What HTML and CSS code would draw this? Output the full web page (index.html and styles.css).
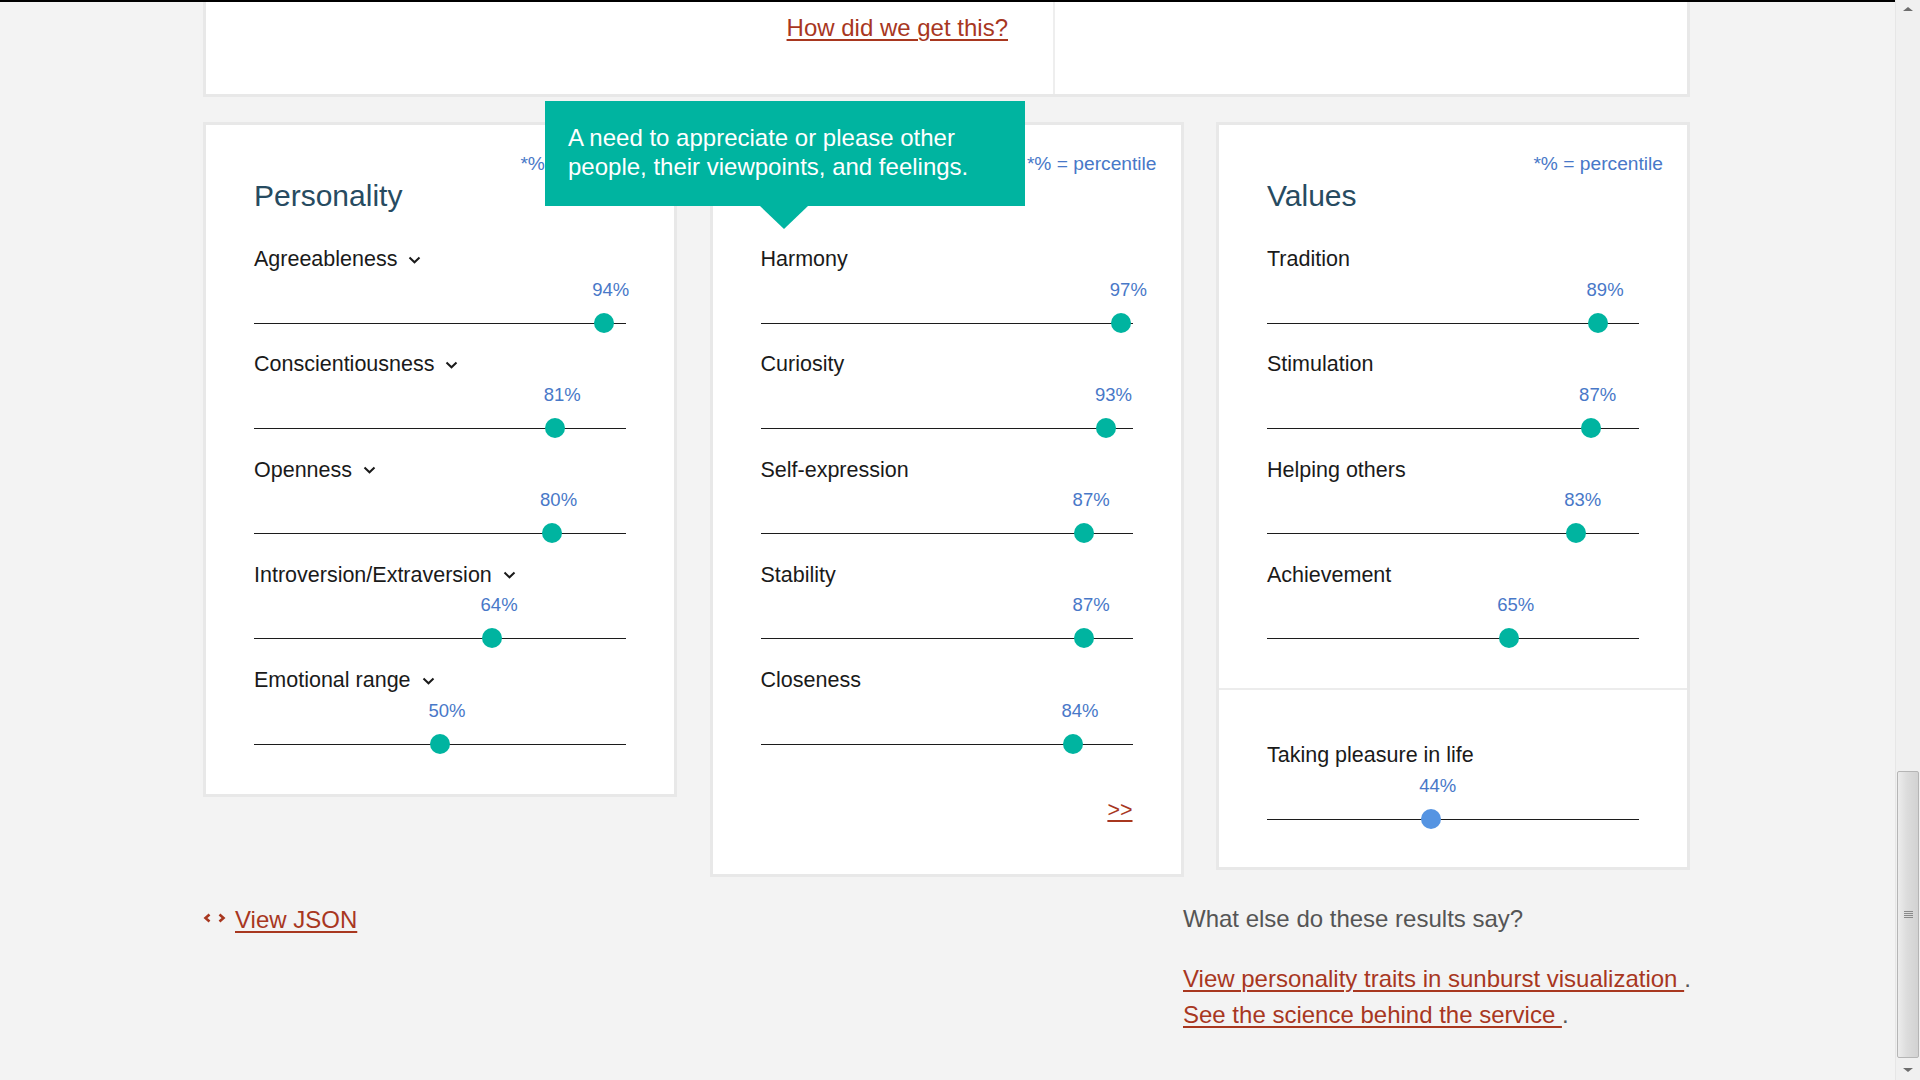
FILE: index.html
```html
<!DOCTYPE html>
<html lang="en">
<head>
<meta charset="utf-8">
<title>Personality Insights</title>
<link rel="stylesheet" href="styles.css">
</head>
<body>
<div class="topbar"></div>
<div class="page">
  <section class="summary">
    <div class="summary-main"><a href="#" class="link">How did we get this?</a></div>
    <div class="summary-side"></div>
  </section>

  <section class="results">
    <div class="tooltip">A need to appreciate or please other people, their viewpoints, and feelings.</div>

    <article class="card">
      <div class="card-section">
        <p class="note">*% = percentile</p>
        <h2 class="card-title">Personality</h2>
        <ul class="traits">
          <li class="trait" style="--p:94%">
            <div class="trait-name">Agreeableness <svg class="chev" viewBox="0 0 13 8"><polyline points="1.5,1.5 6.5,6.3 11.5,1.5"/></svg></div>
            <div class="trait-pct"><span>94%</span></div>
            <div class="trait-bar"><span class="knob"></span></div>
          </li>
          <li class="trait" style="--p:81%">
            <div class="trait-name">Conscientiousness <svg class="chev" viewBox="0 0 13 8"><polyline points="1.5,1.5 6.5,6.3 11.5,1.5"/></svg></div>
            <div class="trait-pct"><span>81%</span></div>
            <div class="trait-bar"><span class="knob"></span></div>
          </li>
          <li class="trait" style="--p:80%">
            <div class="trait-name">Openness <svg class="chev" viewBox="0 0 13 8"><polyline points="1.5,1.5 6.5,6.3 11.5,1.5"/></svg></div>
            <div class="trait-pct"><span>80%</span></div>
            <div class="trait-bar"><span class="knob"></span></div>
          </li>
          <li class="trait" style="--p:64%">
            <div class="trait-name">Introversion/Extraversion <svg class="chev" viewBox="0 0 13 8"><polyline points="1.5,1.5 6.5,6.3 11.5,1.5"/></svg></div>
            <div class="trait-pct"><span>64%</span></div>
            <div class="trait-bar"><span class="knob"></span></div>
          </li>
          <li class="trait" style="--p:50%">
            <div class="trait-name">Emotional range <svg class="chev" viewBox="0 0 13 8"><polyline points="1.5,1.5 6.5,6.3 11.5,1.5"/></svg></div>
            <div class="trait-pct"><span>50%</span></div>
            <div class="trait-bar"><span class="knob"></span></div>
          </li>
        </ul>
      </div>
    </article>

    <article class="card">
      <div class="card-section">
        <p class="note">*% = percentile</p>
        <h2 class="card-title card-title-hidden">Needs</h2>
        <ul class="traits">
          <li class="trait" style="--p:97%">
            <div class="trait-name">Harmony</div>
            <div class="trait-pct"><span>97%</span></div>
            <div class="trait-bar"><span class="knob"></span></div>
          </li>
          <li class="trait" style="--p:93%">
            <div class="trait-name">Curiosity</div>
            <div class="trait-pct"><span>93%</span></div>
            <div class="trait-bar"><span class="knob"></span></div>
          </li>
          <li class="trait" style="--p:87%">
            <div class="trait-name">Self-expression</div>
            <div class="trait-pct"><span>87%</span></div>
            <div class="trait-bar"><span class="knob"></span></div>
          </li>
          <li class="trait" style="--p:87%">
            <div class="trait-name">Stability</div>
            <div class="trait-pct"><span>87%</span></div>
            <div class="trait-bar"><span class="knob"></span></div>
          </li>
          <li class="trait" style="--p:84%">
            <div class="trait-name">Closeness</div>
            <div class="trait-pct"><span>84%</span></div>
            <div class="trait-bar"><span class="knob"></span></div>
          </li>
        </ul>
        <div class="more"><a href="#" class="link">&gt;&gt;</a></div>
      </div>
    </article>

    <article class="card">
      <div class="card-section">
        <p class="note">*% = percentile</p>
        <h2 class="card-title">Values</h2>
        <ul class="traits">
          <li class="trait" style="--p:89%">
            <div class="trait-name">Tradition</div>
            <div class="trait-pct"><span>89%</span></div>
            <div class="trait-bar"><span class="knob"></span></div>
          </li>
          <li class="trait" style="--p:87%">
            <div class="trait-name">Stimulation</div>
            <div class="trait-pct"><span>87%</span></div>
            <div class="trait-bar"><span class="knob"></span></div>
          </li>
          <li class="trait" style="--p:83%">
            <div class="trait-name">Helping others</div>
            <div class="trait-pct"><span>83%</span></div>
            <div class="trait-bar"><span class="knob"></span></div>
          </li>
          <li class="trait" style="--p:65%">
            <div class="trait-name">Achievement</div>
            <div class="trait-pct"><span>65%</span></div>
            <div class="trait-bar"><span class="knob"></span></div>
          </li>
        </ul>
      </div>
      <div class="card-section card-section-extra">
        <ul class="traits">
          <li class="trait" style="--p:44%">
            <div class="trait-name">Taking pleasure in life</div>
            <div class="trait-pct"><span>44%</span></div>
            <div class="trait-bar"><span class="knob knob-blue"></span></div>
          </li>
        </ul>
      </div>
    </article>
  </section>

  <section class="footer">
    <div class="footer-left">
      <a href="#" class="json-link"><svg class="code-icon" viewBox="0 0 24 10"><polyline points="6.5,1.5 2.5,5 6.5,8.5"/><polyline points="16.5,1.5 20.5,5 16.5,8.5"/></svg><span class="link">View JSON</span></a>
    </div>
    <div class="footer-right">
      <p class="footer-q">What else do these results say?</p>
      <ul class="footer-links">
        <li><a href="#" class="link">View personality traits in sunburst visualization </a><span class="dot">.</span></li>
        <li><a href="#" class="link">See the science behind the service </a><span class="dot">.</span></li>
      </ul>
    </div>
  </section>
</div>

<div class="scrollbar">
  <div class="sb-btn sb-up"><span class="sb-arrow-up"></span></div>
  <div class="sb-track">
    <div class="sb-thumb"><span class="sb-grip"></span></div>
  </div>
  <div class="sb-btn sb-down"><span class="sb-arrow-down"></span></div>
</div>
</body>
</html>
```
FILE: styles.css
```css
* { box-sizing: border-box; }

html, body {
  margin: 0;
  padding: 0;
  height: 100%;
  overflow: hidden;
}

body {
  background: #f3f3f3;
  font-family: "Liberation Sans", Arial, sans-serif;
  color: #1e1e1e;
  padding-right: 27px;
}

.topbar {
  position: fixed;
  top: 0;
  left: 0;
  right: 25px;
  height: 2px;
  background: #000;
  z-index: 10;
}

.page {
  width: 1487px;
  margin: 0 auto;
}

.link {
  color: #a8371f;
  text-decoration: underline;
  text-decoration-thickness: 2px;
  text-underline-offset: 3px;
}

/* top summary card */
.summary {
  display: grid;
  grid-template-columns: 849px 1fr;
  background: #fff;
  border: 3px solid #e8e8e8;
  border-top: none;
  height: 97px;
}
.summary-main {
  border-right: 2px solid #eeeeee;
  text-align: right;
  padding: 14px 45px 0 0;
  font-size: 24px;
  line-height: 28px;
}

/* result cards */
.results {
  position: relative;
  display: grid;
  grid-template-columns: repeat(3, 474px);
  column-gap: 32.5px;
  align-items: start;
  margin-top: 25px;
}

.card {
  background: #fff;
  border: 3px solid #e8e8e8;
}

.card-section {
  padding: 28px 48px 40px;
}
.card-section-extra {
  border-top: 2px solid #ececec;
  padding: 52px 48px 38px;
}

.note {
  margin: 0 -24px 0 0;
  text-align: right;
  color: #4878c8;
  font-size: 19.2px;
  line-height: 22px;
}

.card-title {
  margin: 3px 0 0;
  font-weight: normal;
  font-size: 30px;
  line-height: 36px;
  color: #274b61;
}
.card-title-hidden { visibility: hidden; }

.traits {
  list-style: none;
  margin: 32px 0 0;
  padding: 0;
  display: flex;
  flex-direction: column;
  gap: 18.8px;
}
.card-section-extra .traits { margin-top: 0; }

.trait-name {
  display: flex;
  align-items: center;
  gap: 11px;
  font-size: 21.5px;
  line-height: 26px;
  color: #1a1a1a;
}
.chev {
  width: 13px;
  height: 8px;
  fill: none;
  stroke: #1a1a1a;
  stroke-width: 2;
  margin-top: 1px;
}

.trait-pct {
  margin-top: 6.5px;
  font-size: 18.5px;
  line-height: 22px;
  color: #4878c8;
  white-space: nowrap;
}
.trait-pct span {
  display: inline-block;
  margin-left: calc(var(--p) + 7px);
  transform: translateX(-50%);
}

.trait-bar {
  margin-top: 12px;
  height: 20px;
  background: linear-gradient(#1c1c1c, #1c1c1c) 0 10px / 100% 1px no-repeat;
}
.knob {
  display: block;
  width: 20px;
  height: 20px;
  border-radius: 50%;
  background: #00b4a0;
  margin-left: calc(var(--p) - 10px);
}
.knob-blue { background: #5594e2; }

.more {
  margin: 45px 0 13px;
  text-align: right;
  font-size: 21.5px;
  line-height: 22px;
}

/* tooltip */
.tooltip {
  position: absolute;
  left: 342px;
  top: -21px;
  width: 480px;
  padding: 23px 23px 25px;
  background: #00b4a0;
  color: #fff;
  font-size: 24px;
  line-height: 28.5px;
  z-index: 5;
}
.tooltip::after {
  content: "";
  position: absolute;
  left: 215px;
  top: 100%;
  border-left: 24px solid transparent;
  border-right: 24px solid transparent;
  border-top: 23px solid #00b4a0;
}

/* footer */
.footer {
  display: grid;
  grid-template-columns: 1fr 507px;
  margin-top: 28px;
  font-size: 24px;
}
.footer-left { margin-top: -4px; line-height: 28px; }
.json-link {
  display: inline-flex;
  align-items: center;
  gap: 8px;
  text-decoration: none;
}
.code-icon {
  width: 24px;
  height: 10px;
  fill: none;
  stroke: #a8371f;
  stroke-width: 2.6;
  margin-top: -4px;
}
.footer-q {
  margin: 0;
  line-height: 28px;
  color: #555;
}
.footer-links {
  list-style: none;
  margin: 28px 0 0;
  padding: 0;
  line-height: 36px;
  white-space: nowrap;
}
.dot { color: #555; }

/* scrollbar */
.scrollbar {
  position: fixed;
  top: 0;
  right: 0;
  width: 25px;
  height: 100%;
  display: flex;
  flex-direction: column;
  background: #f0f0f0;
  border-left: 1px solid #e6e6e6;
  z-index: 20;
}
.sb-btn {
  height: 18px;
  display: flex;
  align-items: center;
  justify-content: center;
}
.sb-down { height: 20px; }
.sb-arrow-up {
  border-left: 5px solid transparent;
  border-right: 5px solid transparent;
  border-bottom: 4px solid #6d6d6d;
}
.sb-arrow-down {
  border-left: 5px solid transparent;
  border-right: 5px solid transparent;
  border-top: 4px solid #6d6d6d;
}
.sb-track {
  flex: 1;
  padding: 753px 1px 2px;
}
.sb-thumb {
  height: 100%;
  border: 1px solid #b5b5b5;
  border-radius: 2px;
  background: linear-gradient(to right, #ececec 0%, #dcdcdc 45%, #d2d2d2 100%);
  display: flex;
  align-items: center;
  justify-content: center;
}
.sb-grip {
  width: 9px;
  height: 7px;
  background: repeating-linear-gradient(#8a8a8a 0 1px, transparent 1px 2px);
}
```
